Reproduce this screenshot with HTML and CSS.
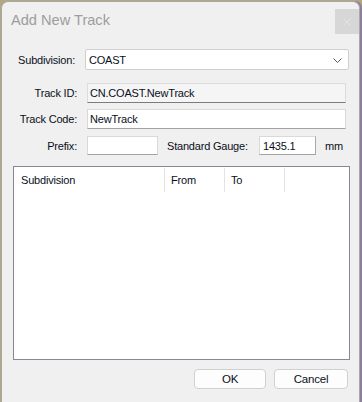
FILE: index.html
```
<!DOCTYPE html>
<html>
<head>
<meta charset="utf-8">
<link rel="stylesheet" href="styles.css">
</head>
<body>
<div class="window">
  <div class="titlebar">
    <span class="title">Add New Track</span>
    <div class="close"><svg width="10" height="10" viewBox="0 0 10 10"><path d="M1 1L9 9M9 1L1 9" stroke="#e2e2e2" stroke-width="1"/></svg></div>
  </div>
  <div class="content">
    <div class="row row-sub">
      <span class="lbl">Subdivision:</span>
      <div class="combo"><span class="val">COAST</span><svg class="chev" width="9" height="5" viewBox="0 0 9 5"><path d="M0.5 0.5L4.5 4.5L8.5 0.5" fill="none" stroke="#5a5a5a" stroke-width="1"/></svg></div>
    </div>
    <div class="row row-id">
      <span class="lbl">Track ID:</span>
      <div class="field readonly wide">CN.COAST.NewTrack</div>
    </div>
    <div class="row row-code">
      <span class="lbl">Track Code:</span>
      <div class="field wide">NewTrack</div>
    </div>
    <div class="row row-prefix">
      <span class="lbl">Prefix:</span>
      <div class="field prefix"></div>
      <span class="gauge-lbl">Standard Gauge:</span>
      <div class="field gauge">1435.1</div>
      <span class="unit">mm</span>
    </div>
    <div class="list">
      <div class="list-head">
        <div class="col c1">Subdivision</div>
        <div class="col c2">From</div>
        <div class="col c3">To</div>
      </div>
    </div>
    <div class="buttons">
      <div class="btn ok">OK</div>
      <div class="btn cancel">Cancel</div>
    </div>
  </div>
</div>
</body>
</html>
```
FILE: styles.css
```
html, body {
  margin: 0;
  padding: 0;
}
body {
  background: #b4a67e;
  width: 362px;
  height: 402px;
  overflow: hidden;
  font-family: "Liberation Sans", Arial, sans-serif;
  font-size: 11px;
  letter-spacing: -0.2px;
  color: #0a0f1a;
}
.window {
  margin: 1px 0 0 1px;
  width: 359px;
  height: 401px;
  box-sizing: border-box;
  border: 1px solid #a8a8a8;
  border-bottom: none;
  border-top-left-radius: 7px;
  border-top-right-radius: 7px;
  background: #f0f0f0;
  box-shadow: 2px 0 0 #8d7f9c;
}
.titlebar {
  height: 40px;
  display: flex;
  align-items: flex-start;
  justify-content: space-between;
}
.title {
  margin: 10px 0 0 9px;
  font-size: 14.6px;
  letter-spacing: 0;
  line-height: 17px;
  color: #9d9d9d;
}
.close {
  margin-top: 7px;
  width: 24px;
  height: 25px;
  background: #d7d7d7;
  display: flex;
  align-items: center;
  justify-content: center;
}
.content {
  display: flex;
  flex-direction: column;
}
.row {
  display: flex;
  align-items: center;
}
.lbl {
  width: 75px;
  text-align: right;
  flex: none;
  margin-right: 10px;
}
.row-sub { margin-top: 7px; }
.row-sub .lbl { width: 73px; margin-right: 10px; }
.combo {
  box-sizing: border-box;
  width: 264px;
  height: 21px;
  background: #fff;
  border: 1px solid #cfcfcf;
  border-radius: 2px;
  display: flex;
  align-items: center;
  justify-content: space-between;
  padding: 0 6px 0 3px;
}
.chev { margin-top: 1px; }
.field {
  box-sizing: border-box;
  height: 20px;
  background: #fff;
  border: 1px solid #d9d9d9;
  border-bottom-color: #a2a2a2;
  padding: 0 0 0 2px;
  display: flex;
  align-items: center;
}
.field.wide { width: 259px; }
.field.readonly {
  background: #f5f5f5;
  border-color: #dcdcdc;
  border-bottom-color: #7c7c7c;
}
.row-id { margin-top: 13px; }
.row-code { margin-top: 6px; }
.row-prefix { margin-top: 7px; }
.row-prefix .field { height: 19px; }
.field.prefix { width: 71px; }
.gauge-lbl {
  margin-left: 9px;
  width: 92px;
  flex: none;
}
.field.gauge {
  width: 57px;
  padding-left: 3px;
  border-right-color: #a8a8a8;
}
.unit { margin-left: 9px; }
.list {
  margin: 11px 0 0 11px;
  width: 337px;
  height: 194px;
  box-sizing: border-box;
  border: 1px solid #848a94;
  background: #fff;
}
.list-head {
  display: flex;
  height: 25px;
}
.col {
  box-sizing: border-box;
  border-right: 1px solid #e3e3e3;
  display: flex;
  align-items: center;
  padding-left: 7px;
  margin-top: 1px;
}
.c1 { width: 151px; }
.c2 { width: 60px; padding-left: 6px; }
.c3 { width: 60px; padding-left: 6px; }
.buttons {
  margin: 9px 11px 0 0;
  display: flex;
  justify-content: flex-end;
  gap: 8px;
}
.btn {
  box-sizing: border-box;
  height: 20px;
  border: 1px solid #d0d0d0;
  border-radius: 4px;
  background: #fdfdfd;
  display: flex;
  align-items: center;
  justify-content: center;
  font-size: 11.5px;
}
.btn.ok { width: 72px; }
.btn.cancel { width: 74px; }
```
